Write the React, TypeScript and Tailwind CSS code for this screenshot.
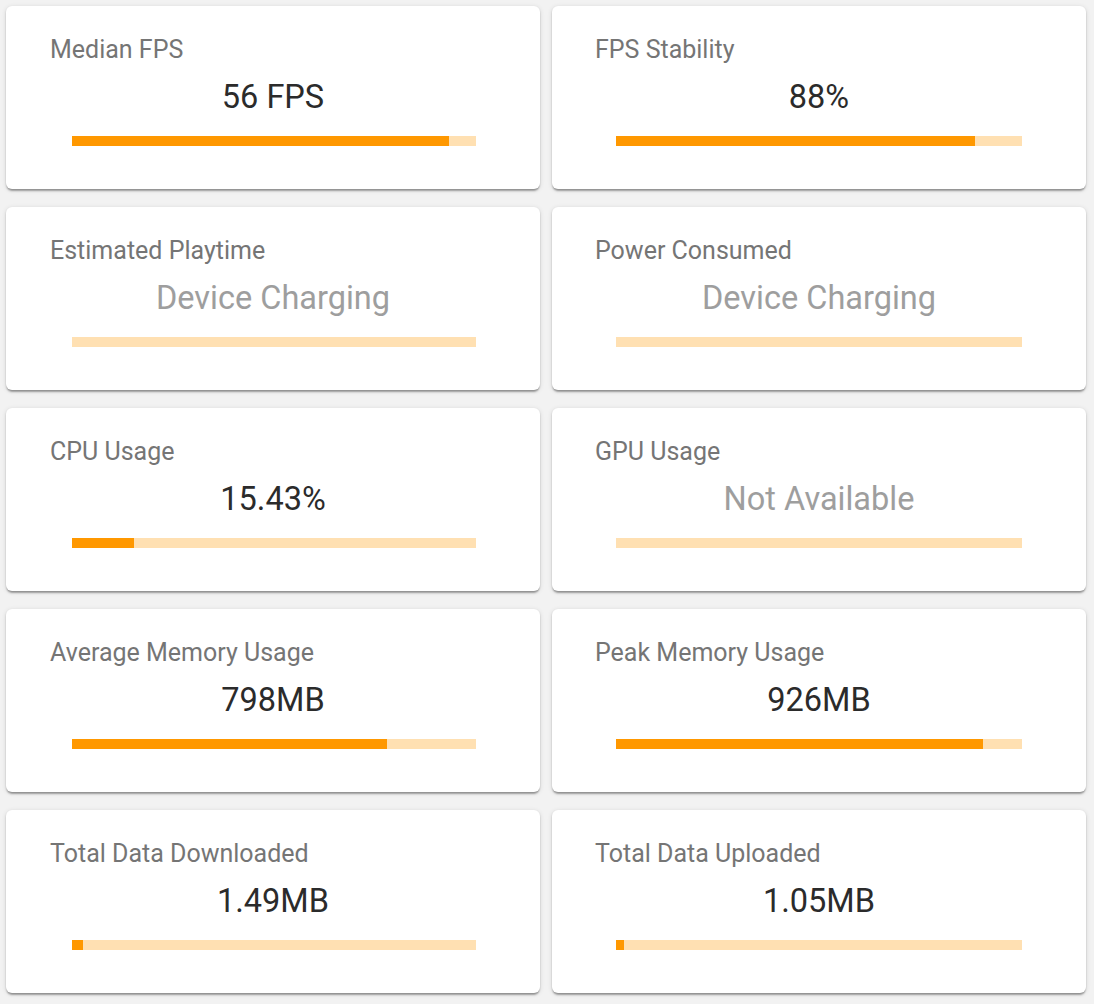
type Stat = {
  label: string;
  value: string;
  pct: number;
  muted?: boolean;
};

const stats: Stat[] = [
  { label: "Median FPS", value: "56 FPS", pct: 93.3 },
  { label: "FPS Stability", value: "88%", pct: 88.4 },
  { label: "Estimated Playtime", value: "Device Charging", pct: 0, muted: true },
  { label: "Power Consumed", value: "Device Charging", pct: 0, muted: true },
  { label: "CPU Usage", value: "15.43%", pct: 15.43 },
  { label: "GPU Usage", value: "Not Available", pct: 0, muted: true },
  { label: "Average Memory Usage", value: "798MB", pct: 78 },
  { label: "Peak Memory Usage", value: "926MB", pct: 90.4 },
  { label: "Total Data Downloaded", value: "1.49MB", pct: 2.7 },
  { label: "Total Data Uploaded", value: "1.05MB", pct: 2 },
];

const StatCard = ({ stat, right }: { stat: Stat; right: boolean }) => {
  return (
    <div className="h-[183px] bg-white rounded-[6px] shadow-[0_3px_2px_-1px_rgba(0,0,0,0.28),0_1px_2px_0_rgba(0,0,0,0.14),0_1px_5px_0_rgba(0,0,0,0.12)] flex flex-col pt-[29px]">
      <p className={`${right ? "pl-[43px]" : "pl-[44px]"} text-[25px] leading-[29px] text-[#757575]`}>
        {stat.label}
      </p>
      <p
        className={`mt-[14px] text-center text-[32.5px] leading-[38px] ${
          stat.muted ? "text-[#9e9e9e]" : "text-[#2b2b2b]"
        }`}
      >
        {stat.value}
      </p>
      <div
        className={`mt-[20px] ${
          right ? "ml-[64px] w-[406px]" : "ml-[66px] w-[404px]"
        } h-[10px] bg-[#ffe0b2]`}
      >
        <div className="h-full bg-[#ff9800]" style={{ width: `${stat.pct}%` }} />
      </div>
    </div>
  );
};

export default function App() {
  return (
    <div className="min-h-[1004px] bg-[#f2f2f2] pl-[6px] pr-[8px] pt-[6px] pb-[12px] font-['Roboto',sans-serif]">
      <div className="grid grid-cols-2 gap-x-[12px] gap-y-[18px]">
        {stats.map((s, i) => (
          <StatCard key={i} stat={s} right={i % 2 === 1} />
        ))}
      </div>
    </div>
  );
}
